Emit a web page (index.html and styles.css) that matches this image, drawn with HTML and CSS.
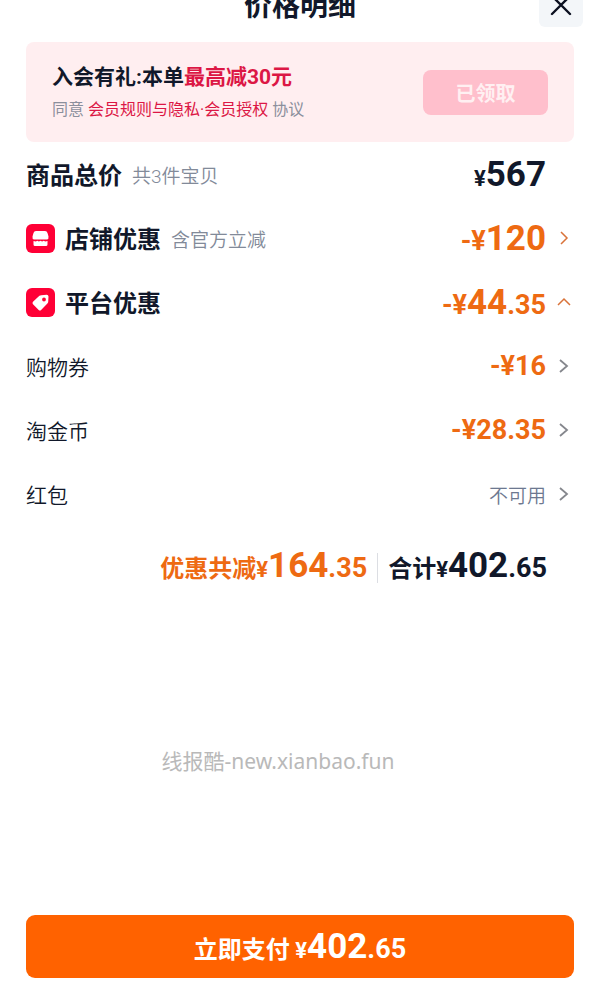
FILE: index.html
```html
<!DOCTYPE html>
<html lang="zh-CN">
<head>
  <meta charset="UTF-8" />
  <meta name="viewport" content="width=device-width, initial-scale=1.0"/>
  <title>价格明细</title>
  <link rel="stylesheet" href="styles.css">
</head>
<body>

  <!-- Header -->
  <header class="header">
    <h1>价格明细</h1>
    <button type="button" class="close-btn" aria-label="关闭">
      <svg width="22" height="22" viewBox="0 0 22 22" fill="none" stroke="#0b1020" stroke-width="2.4" stroke-linecap="round">
        <path d="M2 2L20 20M20 2L2 20"/>
      </svg>
    </button>
  </header>

  <main class="content">
    <!-- Member offer -->
    <section class="member">
      <div>
        <p class="member-title">入会有礼:本单<span class="red">最高减30元</span></p>
        <p class="member-terms">同意 <a href="#terms">会员规则与隐私·会员授权</a> 协议</p>
      </div>
      <button type="button" class="claimed-btn">已领取</button>
    </section>

    <!-- Price rows -->
    <ul class="rows">
      <li class="row">
        <span class="label">商品总价</span>
        <span class="note">共3件宝贝</span>
        <span class="amount dark"><span class="small">¥</span><span class="big">567</span></span>
      </li>
      <li>
        <a class="row" href="#shop">
          <svg class="badge" viewBox="0 0 29 29">
            <rect width="29" height="29" rx="6" fill="#ff0036"/>
            <path fill="#fff" d="M10 7h9q2 0 2.500 2l1 3.500q.4 2.500-1.500 3h-13q-1.900-.5-1.500-3l1-3.500Q8 7 10 7z"/>
            <path fill="#fff" d="M7.500 17l2.300.4 1.500-.7 1.600.9 1.600-.9 1.600.9 1.600-.9 1.500.7 2.300-.4v3.500q0 1.500-1.500 1.500H9q-1.500 0-1.500-1.500z"/>
          </svg>
          <span class="label">店铺优惠</span>
          <span class="note">含官方立减</span>
          <span class="amount"><span class="mid">-¥</span><span class="big">120</span></span>
          <svg class="arrow" viewBox="0 0 14 14"><path d="M4 1l6 6-6 6"/></svg>
        </a>
      </li>
      <li>
        <a class="row" href="#platform">
          <svg class="badge" viewBox="0 0 29 29">
            <rect width="29" height="29" rx="6" fill="#ff0036"/>
            <path fill="#fff" fill-rule="evenodd" d="M15.200 7.300l5.500-.5q1.700 0 1.800 1.700l-.3 5.500q-.1.900-.8 1.600l-6.300 6.300q-1.200 1.100-2.400 0l-5.700-5.700q-1.100-1.200 0-2.400l6.400-6.100q.8-.4 1.800-.4zM18 9.600a1.900 1.900 0 1 0 0 3.800a1.900 1.900 0 1 0 0-3.800z"/>
          </svg>
          <span class="label">平台优惠</span>
          <span class="amount"><span class="mid">-¥</span><span class="big">44</span><span class="mid">.35</span></span>
          <svg class="arrow" viewBox="0 0 14 14"><path d="M1 10l6-6 6 6"/></svg>
        </a>
      </li>
      <li>
        <a class="row" href="#coupon">
          <span class="sub-label">购物券</span>
          <span class="amount"><span class="mid">-¥16</span></span>
          <svg class="arrow gray" viewBox="0 0 14 14"><path d="M3 1l7 6-7 6"/></svg>
        </a>
      </li>
      <li>
        <a class="row" href="#coins">
          <span class="sub-label">淘金币</span>
          <span class="amount"><span class="mid">-¥28.35</span></span>
          <svg class="arrow gray" viewBox="0 0 14 14"><path d="M3 1l7 6-7 6"/></svg>
        </a>
      </li>
      <li>
        <a class="row" href="#redpacket">
          <span class="sub-label">红包</span>
          <span class="amount none">不可用</span>
          <svg class="arrow gray" viewBox="0 0 14 14"><path d="M3 1l7 6-7 6"/></svg>
        </a>
      </li>
    </ul>

    <!-- Totals -->
    <div class="totals">
      <span class="saved">优惠共减<span class="small">¥</span><span class="big">164</span><span class="mid">.35</span></span>
      <span class="sum">合计<span class="small">¥</span><span class="big">402</span><span class="mid">.65</span></span>
    </div>

    <p class="watermark">线报酷-new.xianbao.fun</p>
  </main>

  <!-- Pay -->
  <footer class="footer">
    <button type="button" class="pay-btn">立即支付 <span class="small">¥</span><span class="big">402</span><span class="mid">.65</span></button>
  </footer>

</body>
</html>
```
FILE: styles.css
```css
* {
  box-sizing: border-box;
}

body {
  margin: 0;
  min-height: 100vh;
  display: flex;
  flex-direction: column;
  overflow-x: hidden;
  font-family: "Noto Sans CJK SC", sans-serif;
  color: #11182a;
  background: #fff;
}

h1, p, ul {
  margin: 0;
  padding: 0;
}

ul {
  list-style: none;
}

a {
  color: inherit;
  text-decoration: none;
}

button {
  border: none;
  font-family: inherit;
  cursor: pointer;
}

.header {
  display: grid;
  grid-template-columns: 44px 1fr 44px;
  align-items: center;
  height: 44px;
  margin-top: -17px;
  padding: 0 17px;
}

.header h1 {
  grid-column: 2;
  font-size: 28px;
  line-height: 42px;
  padding-bottom: 2px;
  text-align: center;
}

.close-btn {
  display: flex;
  align-items: center;
  justify-content: center;
  height: 44px;
  padding: 0;
  border-radius: 6px;
  background: #f3f6f9;
}

.content {
  flex: 1;
  padding: 15px 26px 0;
}

/* Member offer */
.member {
  display: flex;
  align-items: center;
  justify-content: space-between;
  height: 100px;
  padding: 0 26px;
  border-radius: 8px;
  background: #ffeef0;
  font-family: Roboto, "Noto Sans CJK SC", sans-serif;
}

.member-title {
  font-size: 21px;
  font-weight: bold;
  line-height: 36px;
}

.member-terms {
  font-size: 16px;
  line-height: 30px;
  color: #8b8f9c;
}

.red,
.member-terms a {
  color: #dc1745;
}

.claimed-btn {
  width: 125px;
  height: 45px;
  padding: 0;
  border-radius: 8px;
  background: #ffbfcc;
  color: #fff0f2;
  font-size: 20px;
  font-weight: bold;
}

/* Price rows */
.row {
  display: flex;
  align-items: center;
  height: 64px;
}

.badge {
  width: 29px;
  height: 29px;
  margin-right: 10px;
}

.label {
  font-size: 24px;
  font-weight: bold;
  line-height: 34px;
}

.note {
  margin-left: 10px;
  font-family: Roboto, "Noto Sans CJK SC", sans-serif;
  font-size: 19px;
  font-weight: 350;
  color: #828a99;
}

.sub-label {
  font-size: 21px;
  font-weight: 350;
}

.amount {
  margin-left: auto;
  font-family: Roboto, "Noto Sans CJK SC", sans-serif;
  font-weight: bold;
  color: #ee6a12;
}

.amount.dark {
  margin-right: 28px;
  color: #11182a;
}

.amount.none {
  font-size: 19px;
  font-weight: 350;
  color: #6d7890;
}

.small,
.mid,
.big {
  font-family: Roboto, sans-serif;
}

.small {
  font-size: 22px;
}

.mid {
  font-size: 27px;
}

.big {
  font-size: 35px;
}

.arrow {
  width: 14px;
  height: 14px;
  margin: 0 3px 0 11px;
  fill: none;
  stroke: #d9733a;
  stroke-width: 1.5;
}

.arrow.gray {
  stroke: #85878d;
  stroke-width: 1.8;
}

/* Totals */
.totals {
  display: flex;
  align-items: center;
  justify-content: flex-end;
  height: 84px;
  padding-right: 27px;
  font-size: 24px;
  font-weight: bold;
  line-height: 26px;
}

.saved {
  color: #ee6a12;
}

.sum {
  margin-left: 10px;
  padding-left: 10px;
  border-left: 1px solid #dcdee3;
}

.watermark {
  margin-top: 136px;
  padding-right: 44px;
  font-family: "Noto Sans", "Noto Sans CJK SC", sans-serif;
  font-size: 21px;
  line-height: 30px;
  text-align: center;
  color: #b9b9b9;
}

/* Pay */
.footer {
  padding: 0 26px 13px;
}

.pay-btn {
  width: 100%;
  height: 63px;
  padding: 0;
  border-radius: 9px;
  background: #ff6200;
  color: #fff;
  font-size: 24px;
  font-weight: bold;
}
```
